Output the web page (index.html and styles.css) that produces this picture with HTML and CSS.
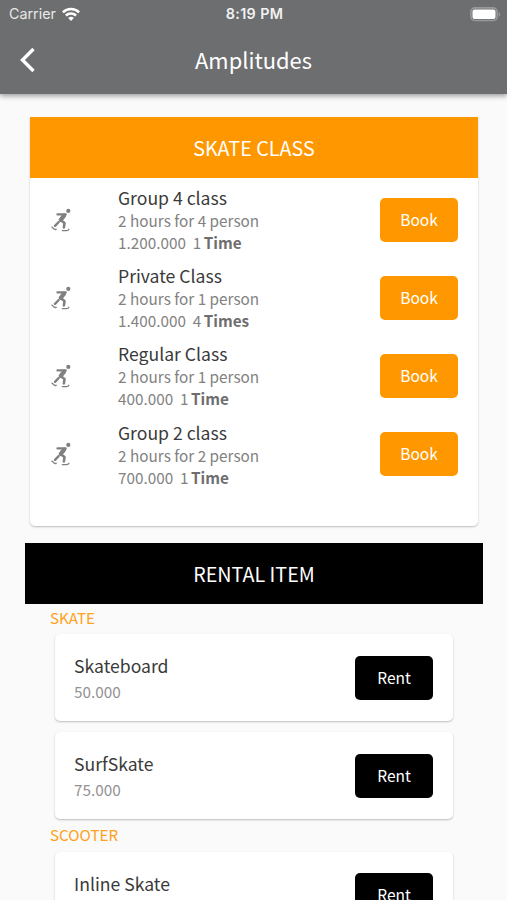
FILE: index.html
```html
<!DOCTYPE html>
<html lang="en">
<head>
<meta charset="utf-8">
<meta name="viewport" content="width=device-width">
<title>Amplitudes</title>
<link rel="stylesheet" href="styles.css">
</head>
<body>
<svg width="0" height="0" class="defs">
  <symbol id="skating" viewBox="0 0 20 24">
    <circle cx="17.300" cy="2.900" r="2.100" fill="currentColor"/>
    <g fill="none" stroke="currentColor" stroke-linecap="round" stroke-linejoin="round">
      <path d="M6.500 6.400h8.200" stroke-width="2.300"/>
      <path d="M13.100 7.600 9.800 11.800" stroke-width="4.200"/>
      <path d="M9.800 12.200l3.700 2.900-.6 4.300" stroke-width="2.600"/>
      <path d="M7.700 14 4 17.800" stroke-width="2.400"/>
      <path d="M.9 19.100l2.500 2.100q.8.600 1.800.1M11.300 22.600h4.300q1.700 0 2.300-1.300" stroke-width="1.300"/>
    </g>
  </symbol>
</svg>
<header class="topbar">
  <div class="status">
    <div class="carrier"><span>Carrier</span>
      <svg class="wifi" viewBox="0 0 18 14"><g fill="none" stroke="#fff" stroke-width="2.500"><path d="M.9 5.300a11.500 11.500 0 0 1 16.200 0"/><path d="M3.900 8.500a7.200 7.200 0 0 1 10.200 0"/></g><path fill="#fff" d="M9 14 6.200 11.100a4 4 0 0 1 5.600 0z"/></svg>
    </div>
    <div class="clock">8:19 PM</div>
    <svg class="battery" viewBox="0 0 31 15"><rect x=".9" y=".9" width="26.200" height="12.600" rx="4" fill="none" stroke="#98999a" stroke-width="1.600"/><rect x="2.500" y="2.500" width="23" height="9.400" rx="2" fill="#fff"/><path d="M28.700 5v4.600c2-.8 2-3.800 0-4.600z" fill="#98999a"/></svg>
  </div>
  <div class="nav">
    <svg class="back" viewBox="0 0 16 26"><path d="M13.500 2 2.500 13l11 11" fill="none" stroke="#fff" stroke-width="3.400"/></svg>
    <h1>Amplitudes</h1>
  </div>
</header>
<main>
  <section class="classes">
    <h2 class="banner orange">SKATE CLASS</h2>
    <div class="class-row"><svg class="skater"><use href="#skating"/></svg><div class="info"><h3>Group 4 class</h3><p>2 hours for 4 person</p><p>1.200.000&nbsp; 1 <b>Time</b></p></div><button class="btn orange">Book</button></div>
    <div class="class-row"><svg class="skater"><use href="#skating"/></svg><div class="info"><h3>Private Class</h3><p>2 hours for 1 person</p><p>1.400.000&nbsp; 4 <b>Times</b></p></div><button class="btn orange">Book</button></div>
    <div class="class-row"><svg class="skater"><use href="#skating"/></svg><div class="info"><h3>Regular Class</h3><p>2 hours for 1 person</p><p>400.000&nbsp; 1 <b>Time</b></p></div><button class="btn orange">Book</button></div>
    <div class="class-row"><svg class="skater"><use href="#skating"/></svg><div class="info"><h3>Group 2 class</h3><p>2 hours for 2 person</p><p>700.000&nbsp; 1 <b>Time</b></p></div><button class="btn orange">Book</button></div>
  </section>
  <section class="rentals">
    <h2 class="banner black">RENTAL ITEM</h2>
    <h4>SKATE</h4>
    <div class="item"><div class="info"><h3>Skateboard</h3><p>50.000</p></div><button class="btn black">Rent</button></div>
    <div class="item"><div class="info"><h3>SurfSkate</h3><p>75.000</p></div><button class="btn black">Rent</button></div>
    <h4>SCOOTER</h4>
    <div class="item last"><div class="info"><h3>Inline Skate</h3></div><button class="btn black">Rent</button></div>
  </section>
</main>
</body>
</html>
```
FILE: styles.css
```css
* { box-sizing: border-box; margin: 0; padding: 0; }
html, body { height: 900px; overflow: hidden; }
body { display: flex; flex-direction: column; background: #fafafa; font-family: "Noto Sans CJK SC", sans-serif; color: #3a3a3a; }
.defs { position: absolute; }
h1, h2, h3, h4 { font-weight: 400; }
.topbar { flex: none; height: 94px; background: #6d6e70; color: #fff; box-shadow: 0 2px 5px rgba(0,0,0,.38); z-index: 1; }
.status { height: 26px; padding: 0 7px 0 9px; display: grid; grid-template-columns: 1fr auto 1fr; align-items: center; font-family: Inter, sans-serif; font-size: 14.300px; line-height: 28px; }
.carrier { display: flex; align-items: center; gap: 6px; color: #e8e8e8; }
.wifi { width: 18px; height: 14px; }
.clock { font-weight: 600; letter-spacing: .4px; color: #f2f2f2; }
.battery { width: 31px; height: 15px; justify-self: end; margin-right: -1px; }
.nav { height: 67px; display: grid; grid-template-columns: 36px 1fr 36px; padding: 0 20px; align-items: center; }
.back { width: 16px; height: 26px; }
h1 { font-size: 21.900px; line-height: 60px; text-align: center; }
main { flex: none; padding-top: 23px; }
.banner { height: 61px; line-height: 61px; text-align: center; color: #fff; font-size: 19.700px; }
.orange { background: #ff9800; }
.black { background: #000; }
.classes { margin: 0 29px 0 30px; height: 409px; background: #fff; border-radius: 0 0 5px 5px; box-shadow: 0 1px 2px rgba(0,0,0,.25); }
.class-row { height: 78.200px; padding: 5px 20px 0 21px; display: grid; grid-template-columns: 20px 1fr 78px; column-gap: 47px; align-items: center; }
.skater { width: 20px; height: 24px; color: #808080; }
.info h3 { font-size: 17.600px; line-height: 24px; }
.info p { font-size: 15.300px; line-height: 22px; color: #828282; white-space: nowrap; }
.class-row h3 { margin-bottom: -1px; }
.info b { font-weight: 700; color: #6e6e6e; margin-left: -1px; }
.btn { width: 78px; height: 44px; border: 0; border-radius: 5px; color: #fff; font: 400 15.500px/42px "Noto Sans CJK SC", sans-serif; padding-bottom: 2px; }
.rentals { margin: 17px 24px 0 25px; }
.rentals h4 { height: 30px; padding-left: 25px; font-size: 15.200px; line-height: 27px; color: #ffa11a; }
.item { height: 87px; margin: 0 30px 11px; padding: 0 20px 0 19px; display: flex; justify-content: space-between; align-items: center; background: #fff; border-radius: 5px; box-shadow: 0 1px 2px rgba(0,0,0,.25); }
.rentals .item + h4 { margin-top: -8px; line-height: 25px; }
.item .info { padding-top: 1px; }
.item .info h3 { line-height: 26px; }
.item .info p { line-height: 25px; color: #929292; }
.item.last { height: 86px; align-items: flex-start; padding-top: 21px; }
.item.last .info { padding: 0; margin-top: -2px; }
```
